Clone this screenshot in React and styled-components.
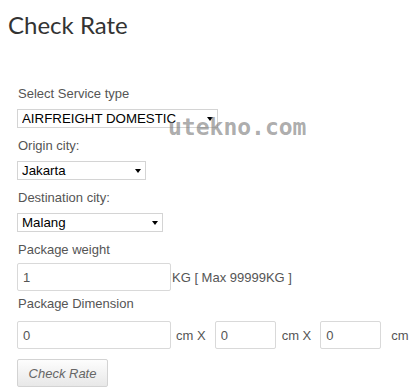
import React from 'react';
import styled, { createGlobalStyle } from 'styled-components';

const GlobalStyle = createGlobalStyle`
  html, body {
    margin: 0;
    padding: 0;
    background: #fff;
  }
  body {
    font-family: "Liberation Sans", Arial, sans-serif;
  }
`;

const Page = styled.div`
  position: relative;
  width: 419px;
  height: 391px;
  overflow: hidden;
  background: #fff;
`;

const Title = styled.h1`
  margin: 0;
  padding: 9px 0 0 8px;
  font-family: Lato, "Open Sans", sans-serif;
  font-weight: 400;
  font-size: 24px;
  line-height: 32px;
  color: #333;
`;

const Form = styled.form`
  display: flex;
  flex-direction: column;
  padding: 44px 0 0 17px;
`;

const Group = styled.div`
  display: flex;
  flex-direction: column;
  align-items: flex-start;
  margin-bottom: ${({ gap }) => gap || 10}px;
`;

const Label = styled.label`
  display: block;
  font-size: 13px;
  line-height: 18px;
  color: #555;
  padding-left: 1px;
  margin-bottom: ${({ space }) => space || 6}px;
`;

const SelectWrap = styled.div`
  position: relative;
  width: ${({ w }) => w}px;
  height: 19px;

  &::after {
    content: '';
    position: absolute;
    right: 5px;
    top: 8px;
    border-left: 3.5px solid transparent;
    border-right: 3.5px solid transparent;
    border-top: 4px solid #000;
    pointer-events: none;
  }
`;

const Select = styled.select`
  appearance: none;
  -webkit-appearance: none;
  box-sizing: border-box;
  width: 100%;
  height: 100%;
  margin: 0;
  padding: 0 0 0 4px;
  border: 1px solid #d4d4d4;
  border-radius: 0;
  background: #fff;
  font-family: "Liberation Sans", Arial, sans-serif;
  font-size: 13.3px;
  color: #000;
  outline: none;
`;

const Row = styled.div`
  display: flex;
  align-items: center;
`;

const Input = styled.input`
  box-sizing: border-box;
  width: ${({ w }) => w}px;
  height: 28px;
  margin: 0;
  padding: 0 5px;
  border: 1px solid #d9d9d9;
  border-radius: 2px;
  font-family: "Liberation Sans", Arial, sans-serif;
  font-size: 13px;
  color: #555;
  outline: none;
`;

const Unit = styled.span`
  font-size: 13px;
  color: #555;
  margin-left: ${({ l }) => l}px;
  margin-right: ${({ r }) => r || 0}px;
`;

const Button = styled.button`
  box-sizing: border-box;
  width: 91px;
  height: 28px;
  padding: 0;
  border: 1px solid #d3d3d3;
  border-radius: 2px;
  background: linear-gradient(#fdfdfd, #e8e8e8);
  font-family: "Liberation Sans", Arial, sans-serif;
  font-style: italic;
  font-size: 13px;
  color: #666;
  align-self: flex-start;
`;

const Watermark = styled.div`
  position: absolute;
  left: 168px;
  top: 114px;
  font-family: "DejaVu Sans Mono", monospace;
  font-weight: bold;
  font-size: 23px;
  line-height: 26px;
  color: rgba(120, 120, 120, 0.62);
  pointer-events: none;
`;

export default function App() {
  return (
    <Page>
      <GlobalStyle />
      <Title>Check Rate</Title>
      <Form onSubmit={(e) => e.preventDefault()}>
        <Group gap={9}>
          <Label>Select Service type</Label>
          <SelectWrap w={201}>
            <Select defaultValue="AIRFREIGHT DOMESTIC">
              <option>AIRFREIGHT DOMESTIC</option>
            </Select>
          </SelectWrap>
        </Group>
        <Group gap={9}>
          <Label>Origin city:</Label>
          <SelectWrap w={129}>
            <Select defaultValue="Jakarta">
              <option>Jakarta</option>
            </Select>
          </SelectWrap>
        </Group>
        <Group gap={9}>
          <Label>Destination city:</Label>
          <SelectWrap w={146}>
            <Select defaultValue="Malang">
              <option>Malang</option>
            </Select>
          </SelectWrap>
        </Group>
        <Group gap={4}>
          <Label space={4}>Package weight</Label>
          <Row>
            <Input w={154} defaultValue="1" />
            <Unit l={1}>KG [ Max 99999KG ]</Unit>
          </Row>
        </Group>
        <Group gap={10}>
          <Label space={8}>Package Dimension</Label>
          <Row>
            <Input w={154} defaultValue="0" />
            <Unit l={5} r={9}>cm X</Unit>
            <Input w={61} defaultValue="0" />
            <Unit l={6} r={9}>cm X</Unit>
            <Input w={61} defaultValue="0" />
            <Unit l={10}>cm</Unit>
          </Row>
        </Group>
        <Button type="button">Check Rate</Button>
      </Form>
      <Watermark>utekno.com</Watermark>
    </Page>
  );
}
